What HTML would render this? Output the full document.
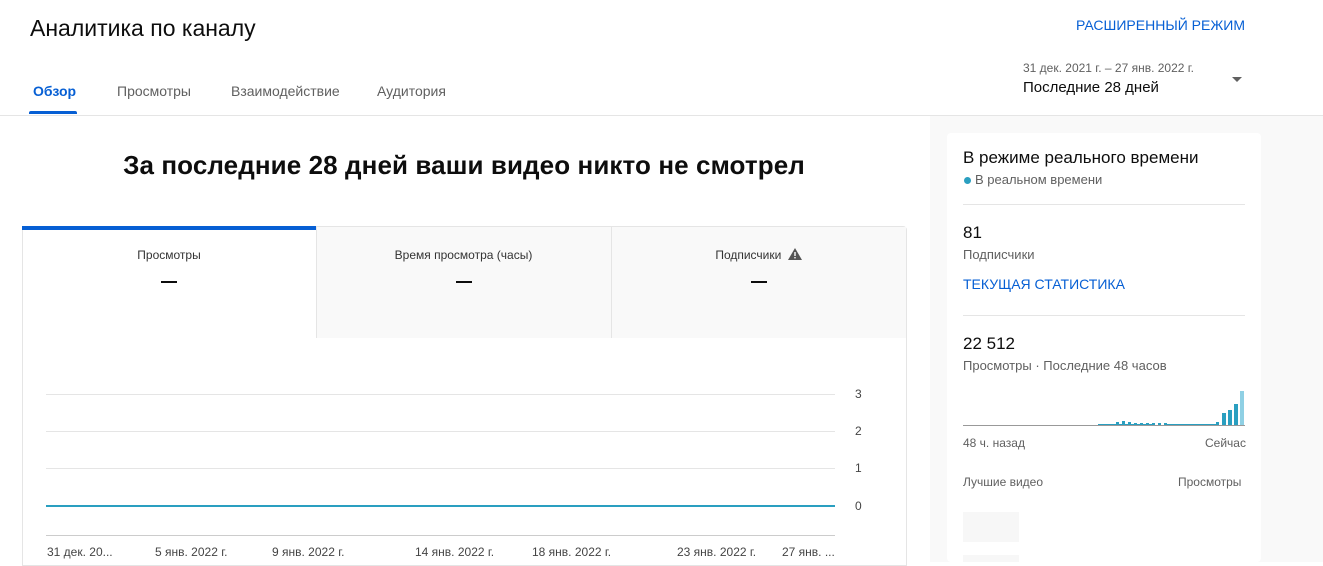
<!DOCTYPE html>
<html><head><meta charset="utf-8"><style>
*{margin:0;padding:0;box-sizing:border-box}
body{width:1323px;height:562px;overflow:hidden;background:#fff;font-family:"Liberation Sans",sans-serif;color:#0d0d0d;position:relative}
.a{position:absolute;white-space:nowrap}
</style></head><body>
<div class="a" style="left:30px;top:15px;font-size:23px;color:#0d0d0d">Аналитика по каналу</div>
<div class="a" style="left:1076px;top:17px;font-size:14px;color:#065fd4;font-weight:500">РАСШИРЕННЫЙ РЕЖИМ</div>
<div class="a" style="left:1023px;top:61px;font-size:12px;color:#606060">31 дек. 2021 г. – 27 янв. 2022 г.</div>
<div class="a" style="left:1023px;top:79px;font-size:15px;color:#0d0d0d">Последние 28 дней</div>
<div class="a" style="left:1232px;top:77px;width:0;height:0;border-left:5px solid transparent;border-right:5px solid transparent;border-top:5px solid #606060"></div>
<div class="a" style="left:33px;top:83px;font-size:14px;color:#065fd4;font-weight:bold">Обзор</div>
<div class="a" style="left:29px;top:111px;width:48px;height:3px;background:#065fd4;border-radius:2px 2px 0 0"></div>
<div class="a" style="left:117px;top:83px;font-size:14px;color:#606060">Просмотры</div>
<div class="a" style="left:231px;top:83px;font-size:14px;color:#606060">Взаимодействие</div>
<div class="a" style="left:377px;top:83px;font-size:14px;color:#606060">Аудитория</div>
<div class="a" style="left:0;top:115px;width:1323px;height:1px;background:#e5e5e5"></div>
<div class="a" style="left:930px;top:116px;width:393px;height:446px;background:#f9f9f9"></div>
<div class="a" style="left:947px;top:133px;width:314px;height:429px;background:#fff;border-radius:4px"></div>

<div class="a" style="left:0;top:150px;width:928px;text-align:center;font-size:26px;font-weight:bold;letter-spacing:0.1px">За последние 28 дней ваши видео никто не смотрел</div>

<div class="a" style="left:22px;top:226px;width:885px;height:340px;border:1px solid #e5e5e5;border-radius:4px 4px 0 0"></div>
<div class="a" style="left:22px;top:226px;width:294px;height:4px;background:#065fd4"></div>
<div class="a" style="left:316px;top:227px;width:590px;height:111px;background:#f9f9f9;border-left:1px solid #e5e5e5"></div>
<div class="a" style="left:611px;top:227px;width:1px;height:111px;background:#e5e5e5"></div>
<div class="a" style="left:22px;top:248px;width:294px;text-align:center;font-size:12px;color:#333">Просмотры</div>
<div class="a" style="left:316px;top:248px;width:295px;text-align:center;font-size:12px;color:#333">Время просмотра (часы)</div>
<div class="a" style="left:611px;top:248px;width:295px;text-align:center;font-size:12px;color:#333">Подписчики <svg width="14" height="12" viewBox="0 0 14 12" style="vertical-align:-1px;margin-left:3px"><path d="M7 0L14 12H0Z" fill="#555"/><rect x="6.3" y="4" width="1.4" height="4" fill="#fff"/><rect x="6.3" y="9" width="1.4" height="1.4" fill="#fff"/></svg></div>
<div class="a" style="left:161px;top:281px;width:16px;height:2px;background:#0d0d0d"></div>
<div class="a" style="left:456px;top:281px;width:16px;height:2px;background:#0d0d0d"></div>
<div class="a" style="left:751px;top:281px;width:16px;height:2px;background:#0d0d0d"></div>

<div class="a" style="left:46px;top:394px;width:789px;height:1px;background:#e5e5e5"></div>
<div class="a" style="left:46px;top:431px;width:789px;height:1px;background:#e5e5e5"></div>
<div class="a" style="left:46px;top:468px;width:789px;height:1px;background:#e5e5e5"></div>
<div class="a" style="left:46px;top:505px;width:789px;height:2px;background:#2a9fc0"></div>
<div class="a" style="left:46px;top:535px;width:789px;height:1px;background:#ccc"></div>
<div class="a" style="left:855px;top:387px;font-size:12px;color:#444">3</div>
<div class="a" style="left:855px;top:424px;font-size:12px;color:#444">2</div>
<div class="a" style="left:855px;top:461px;font-size:12px;color:#444">1</div>
<div class="a" style="left:855px;top:499px;font-size:12px;color:#444">0</div>
<div class="a" style="left:47px;top:545px;font-size:12px;color:#444">31 дек. 20...</div>
<div class="a" style="left:155px;top:545px;font-size:12px;color:#444">5 янв. 2022 г.</div>
<div class="a" style="left:272px;top:545px;font-size:12px;color:#444">9 янв. 2022 г.</div>
<div class="a" style="left:415px;top:545px;font-size:12px;color:#444">14 янв. 2022 г.</div>
<div class="a" style="left:532px;top:545px;font-size:12px;color:#444">18 янв. 2022 г.</div>
<div class="a" style="left:677px;top:545px;font-size:12px;color:#444">23 янв. 2022 г.</div>
<div class="a" style="left:782px;top:545px;font-size:12px;color:#444">27 янв. ...</div>

<div class="a" style="left:963px;top:148px;font-size:17px">В режиме реального времени</div>
<div class="a" style="left:964px;top:177px;width:7px;height:7px;border-radius:50%;background:#2a9fc0"></div>
<div class="a" style="left:975px;top:172px;font-size:13px;color:#606060">В реальном времени</div>
<div class="a" style="left:963px;top:204px;width:282px;height:1px;background:#e5e5e5"></div>
<div class="a" style="left:963px;top:223px;font-size:17px">81</div>
<div class="a" style="left:963px;top:247px;font-size:13px;color:#606060">Подписчики</div>
<div class="a" style="left:963px;top:276px;font-size:14px;color:#065fd4;font-weight:500">ТЕКУЩАЯ СТАТИСТИКА</div>
<div class="a" style="left:963px;top:315px;width:282px;height:1px;background:#e5e5e5"></div>
<div class="a" style="left:963px;top:334px;font-size:17px">22 512</div>
<div class="a" style="left:963px;top:358px;font-size:13px;color:#606060">Просмотры · Последние 48 часов</div>
<div class="a" style="left:963px;top:425px;width:282px;height:1px;background:#999"></div>
<svg class="a" style="left:963px;top:385px" width="282" height="41">
<g fill="#2a9fc0">
<rect x="135" y="39" width="55" height="1"/>
<rect x="153" y="37" width="3" height="3"/><rect x="159" y="36" width="3" height="4"/><rect x="165" y="37" width="3" height="3"/>
<rect x="171" y="38" width="3" height="2"/><rect x="177" y="38" width="3" height="2"/><rect x="183" y="38" width="3" height="2"/><rect x="189" y="38" width="3" height="2"/><rect x="195" y="38" width="3" height="2"/><rect x="201" y="38" width="3" height="2"/>
<rect x="204" y="39" width="50" height="1"/>
<rect x="253" y="37" width="3" height="3"/>
<rect x="259" y="28" width="4" height="12"/><rect x="265" y="25" width="4" height="15"/><rect x="271" y="19" width="4" height="21"/>
<rect x="277" y="6" width="4" height="34" fill="#8fd0e4"/>
</g></svg>
<div class="a" style="left:963px;top:436px;font-size:12px;color:#606060">48 ч. назад</div>
<div class="a" style="left:1205px;top:436px;font-size:12px;color:#606060">Сейчас</div>
<div class="a" style="left:963px;top:475px;font-size:12px;color:#606060">Лучшие видео</div>
<div class="a" style="left:1178px;top:475px;font-size:12px;color:#606060">Просмотры</div>
<div class="a" style="left:963px;top:512px;width:56px;height:30px;background:#f7f7f7"></div>
<div class="a" style="left:963px;top:555px;width:56px;height:7px;background:#f7f7f7"></div>
</body></html>
